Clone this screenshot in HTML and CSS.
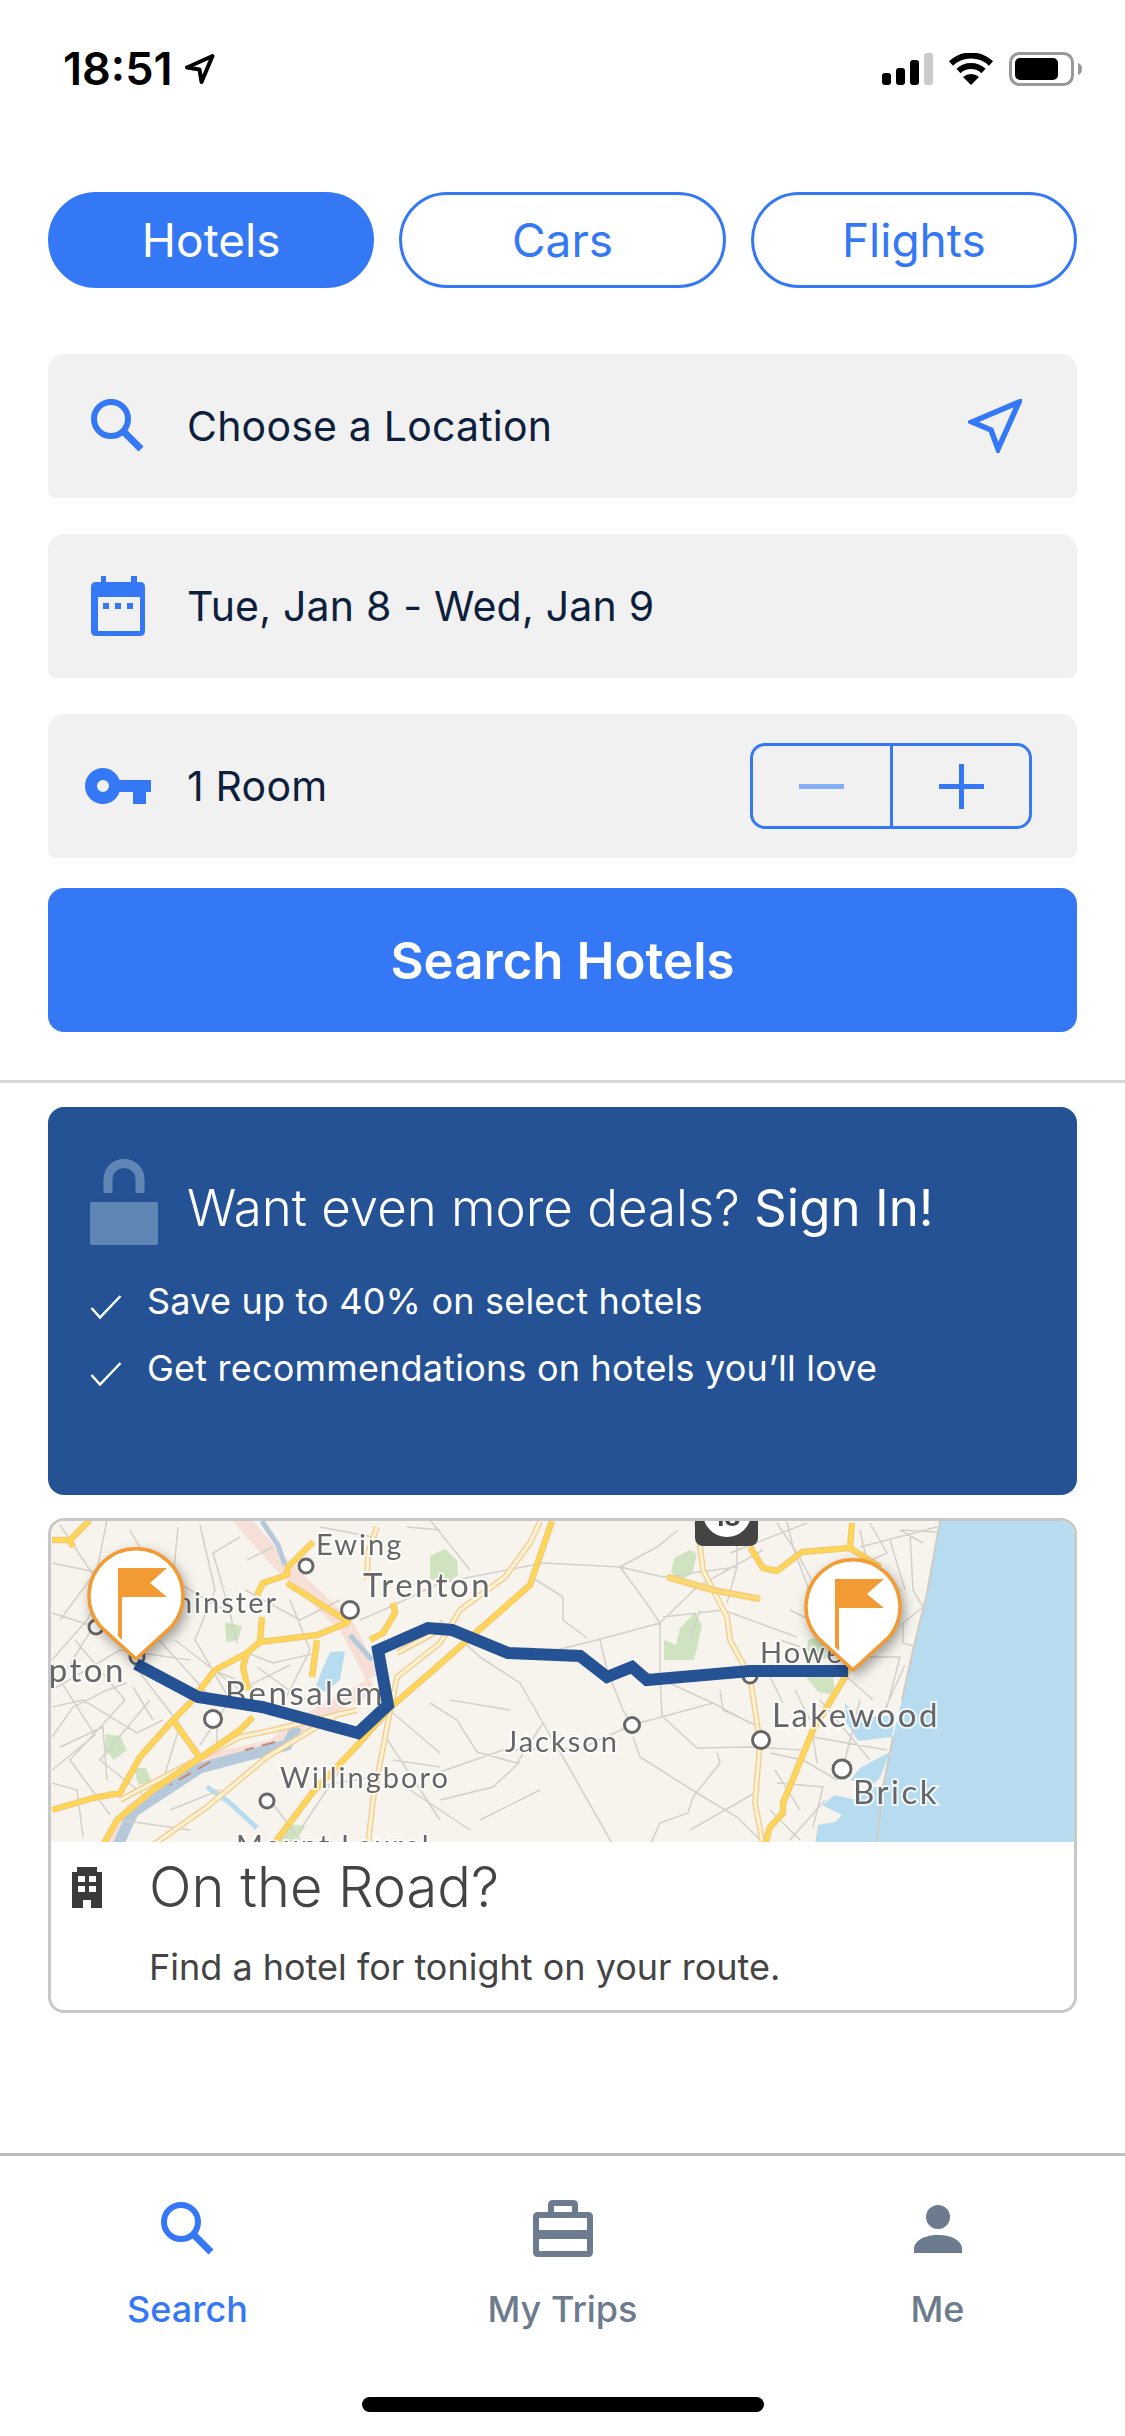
FILE: index.html
```html
<!DOCTYPE html>
<html lang="en">

<head>
    <meta charset="UTF-8" />
    <title>Search Hotels</title>
    <link rel="stylesheet" href="styles.css">
</head>

<body>
    <div class="phone">
        <!-- status bar -->
        <div class="status">
            <span class="time">18:51</span>
            <svg class="status-arrow" width="30" height="30" viewBox="0 0 30 30">
                <path d="M27.5 2 L2 13.5 L14.5 15.5 L16.5 28 Z" fill="none" stroke="#000" stroke-width="4" stroke-linejoin="round" />
            </svg>
            <svg class="status-signal" width="51" height="32" viewBox="0 0 51 32">
                <rect x="0" y="20" width="9" height="12" rx="3" fill="#000" />
                <rect x="14" y="15" width="9" height="17" rx="3" fill="#000" />
                <rect x="28" y="7" width="9" height="25" rx="3" fill="#000" />
                <rect x="42" y="0" width="9" height="32" rx="3" fill="#cbcbcb" />
            </svg>
            <svg class="status-wifi" width="46" height="32" viewBox="0 0 46 32">
                <path d="M3 10.5 A29 29 0 0 1 43 10.5" fill="none" stroke="#000" stroke-width="6" />
                <path d="M10.5 18 A18 18 0 0 1 35.500 18" fill="none" stroke="#000" stroke-width="6" />
                <path d="M23 32 L15 24 A12 12 0 0 1 31 24 Z" fill="#000" />
            </svg>
            <svg class="status-battery" width="73" height="34" viewBox="0 0 73 34">
                <rect x="1.500" y="1.500" width="62" height="31" rx="9" fill="none" stroke="#999" stroke-width="3" />
                <rect x="6" y="6" width="43" height="22" rx="5" fill="#000" />
                <path d="M69 11 C72 12 73 14 73 17 C73 20 72 22 69 23 Z" fill="#999" />
            </svg>
        </div>

        <!-- hotels / cars / flights -->
        <div class="pills">
            <div class="pill active">Hotels</div>
            <div class="pill">Cars</div>
            <div class="pill">Flights</div>
        </div>

        <div class="form">
            <div class="field">
                <div class="field-icon">
                    <svg width="54" height="54" viewBox="0 0 54 54">
                        <circle cx="20" cy="20" r="17" fill="none" stroke="#3578f6" stroke-width="6" />
                        <path d="M32 32 L50 50" stroke="#3578f6" stroke-width="7" />
                    </svg>
                </div>
                <span class="field-text">Choose a Location</span>
                <svg class="field-nav" width="54" height="54" viewBox="0 0 54 54">
                    <path d="M51 3 L4 23 L23 31 L30 50 Z" fill="none" stroke="#3578f6" stroke-width="5.500" />
                </svg>
            </div>
            <div class="field">
                <div class="field-icon">
                    <svg width="54" height="60" viewBox="0 0 54 60">
                        <path fill="#3578f6" fill-rule="evenodd" d="M10 0 H15 V6 H40 V0 H46 V6 H49 Q54 6 54 11 V55 Q54 60 49 60 H5 Q0 60 0 55 V11 Q0 6 5 6 H10 Z M7 21 V55 H49 V21 Z" />
                        <rect x="12" y="27" width="6" height="6" fill="#3578f6" />
                        <rect x="24" y="27" width="6" height="6" fill="#3578f6" />
                        <rect x="36" y="27" width="6" height="6" fill="#3578f6" />
                    </svg>
                </div>
                <span class="field-text">Tue, Jan 8 - Wed, Jan 9</span>
            </div>
            <div class="field">
                <div class="field-icon">
                    <svg width="66" height="36" viewBox="0 0 66 36">
                        <path fill="#3578f6" fill-rule="evenodd" d="M18 0 C26 0 32 5 34.500 12 H66 V24 H61 V36 H48 V24 H34.500 C32 31 26 36 18 36 C8 36 0 28 0 18 C0 8 8 0 18 0 Z M18 12 A6 6 0 1 0 18 24 A6 6 0 1 0 18 12 Z" />
                    </svg>
                </div>
                <span class="field-text">1 Room</span>
                <div class="stepper">
                    <div class="step minus"><span class="bar-h"></span></div>
                    <div class="step plus"><span class="bar-h"></span><span class="bar-v"></span></div>
                </div>
            </div>
            <div class="search-btn">Search Hotels</div>
        </div>

        <div class="divider"></div>

        <!-- sign in banner -->
        <div class="deals">
            <div class="deals-head">
                <svg class="deals-lock" width="68" height="86" viewBox="0 0 68 86">
                    <path d="M18 34 V21 C18 -1 50 -1 50 21 V34" fill="none" stroke="#5f86b5" stroke-width="9" />
                    <rect x="0" y="43" width="68" height="43" rx="2" fill="#5f86b5" />
                </svg>
                <div class="deals-title">Want even more deals? <span class="sign-in">Sign In!</span></div>
            </div>
            <ul class="deals-list">
                <li>
                    <svg width="32" height="24" viewBox="0 0 32 24"><path d="M1.500 13 L10 22.500 L30.500 1" fill="none" stroke="#fff" stroke-width="2.500" /></svg>
                    <span>Save up to 40% on select hotels</span>
                </li>
                <li>
                    <svg width="32" height="24" viewBox="0 0 32 24"><path d="M1.500 13 L10 22.500 L30.500 1" fill="none" stroke="#fff" stroke-width="2.500" /></svg>
                    <span>Get recommendations on hotels you’ll love</span>
                </li>
            </ul>
        </div>

        <!-- on the road card -->
        <div class="road-card">
            <svg class="map" width="1023" height="321" viewBox="51 1521 1023 321">
                <defs>
                    <path id="majors" d="M52 1540 L70 1540 L90 1520 M70 1540 L73 1547
                        M313 1542 L288 1567 L287 1575 L263 1583 L257 1595
                        M287 1583 L350 1623
                        M347 1623 L317 1635 L260 1642 L247 1653 L215 1670 L190 1703 L173 1720 L140 1757 L120 1793 L93 1798 L52 1810
                        M260 1642 L262 1617
                        M247 1653 L243 1667 L248 1690
                        M317 1640 L312 1677
                        M173 1720 L200 1758
                        M253 1717 L240 1730 L200 1758 L153 1790 L117 1820 L103 1845
                        M552 1521 L530 1585 L430 1673 L393 1705 L353 1750 L313 1792 L273 1845
                        M393 1603 L395 1613 L383 1633 L370 1640
                        M750 1547 L763 1568 L777 1571 L802 1552 L850 1548 L852 1523 M850 1548 L880 1567
                        M850 1660 L845 1677 L813 1730 L802 1757 L783 1803 L783 1813 L770 1827 L765 1845" />
                    <path id="seconds" d="M540 1522 L530 1543 L505 1577 L460 1610 L440 1643 L397 1677 L387 1727 L373 1800 L368 1845
                        M697 1522 L703 1570 L727 1617 L730 1640 L750 1677 L760 1743 L755 1803 L763 1845
                        M377 1527 L368 1553 L367 1580
                        M440 1630 L397 1653
                        M357 1710 L273 1730 L240 1737 L120 1800
                        M340 1713 L267 1757 L207 1807 L153 1845" />
                </defs>

                <rect x="51" y="1521" width="1023" height="321" fill="#f7f4ee" />

                <g class="map-base">
                    <g fill="#cfe3c0">
                        <path d="M225 1622 L242 1626 L238 1640 L226 1642 Z" />
                        <path d="M106 1734 L120 1736 L127 1750 L114 1760 L105 1750 Z" />
                        <path d="M134 1768 L146 1768 L152 1782 L138 1785 Z" />
                        <path d="M285 1824 L305 1826 L296 1842 L280 1842 Z" />
                        <path d="M430 1556 L445 1549 L457 1560 L458 1576 L440 1585 L430 1578 Z" />
                        <path d="M674 1558 L690 1550 L697 1554 L692 1574 L680 1580 L671 1572 Z" />
                        <path d="M664 1640 L676 1645 L680 1628 L695 1612 L702 1625 L697 1648 L694 1660 L664 1660 Z" />
                        <path d="M808 1640 L825 1634 L835 1650 L830 1658 L806 1660 Z" />
                        <path d="M806 1677 L833 1676 L835 1695 L818 1692 Z" />
                    </g>

                    <path d="M940 1519 L927 1593 L913 1650 L902 1700 L893 1737 L883 1787 L877 1845 L1076 1845 L1076 1519 Z" fill="#b7dcf0" />
                    <path d="M845 1703 L858 1718 L880 1716 L895 1716 L892 1737 L858 1741 L846 1722 Z" fill="#b7dcf0" />
                    <path d="M890 1752 L860 1768 L850 1780 L870 1785 L885 1790 L880 1845 L815 1845 L818 1825 L835 1822 L842 1815 L822 1805 L835 1795 L856 1800 L880 1778 Z" fill="#b7dcf0" />
                    <path d="M330 1652 L345 1651 L340 1680 L325 1692 L316 1686 L322 1670 Z" fill="#b7dcf0" />
                    <path d="M207 1787 L230 1803 L257 1828" fill="none" stroke="#b7dcf0" stroke-width="5" />

                    <!-- rivers -->
                    <path class="river-pink" d="M237 1515 L280 1563 L347 1627 L373 1677" />
                    <path class="river-pink" d="M373 1685 L297 1727 L273 1747 L200 1763 L133 1810 L113 1845" />
                    <path class="river-blue" d="M262 1521 L278 1545 L285 1565" />
                    <path class="river-blue" d="M350 1635 L372 1660" />
                    <path class="river-blue wide" d="M297 1727 L287 1745 L200 1768 L133 1812 L118 1845" />
                    <path class="river-dash" d="M275 1742 L245 1750 M210 1762 L170 1785 M150 1795 L125 1815" />

                    <!-- small roads -->
                    <path class="minor" d="M543 1563 L620 1567 L663 1577 L737 1567 M620 1567 L643 1598 L660 1623 L660 1677 L662 1717
                        M620 1567 L657 1547 L678 1530 M563 1597 L563 1620 L587 1638 M533 1578 L563 1597
                        M660 1623 L597 1640 L557 1650 M660 1623 L697 1587 L763 1550 M663 1617 L723 1610 L797 1637
                        M600 1640 L607 1670 L623 1710 L632 1725 M480 1657 L520 1683 L543 1723 L563 1757 L613 1845
                        M430 1703 L457 1720 L477 1752 L517 1763 L543 1723 M437 1773 L503 1750 L582 1748 L632 1725 L713 1703 L750 1723
                        M440 1800 L493 1787 L520 1762 M640 1757 L697 1793 L737 1817 L760 1840 M633 1737 L640 1757
                        M697 1748 L663 1717 M697 1748 L750 1747 L803 1750 M717 1753 L720 1763 L693 1797 L688 1813 L660 1823 L650 1845
                        M720 1690 L723 1710 L760 1727 M647 1673 L713 1703 M777 1523 L797 1553 L817 1590
                        M727 1603 L737 1567 L737 1540 M730 1553 L807 1523 M787 1522 L793 1547 L810 1593
                        M870 1523 L887 1553 L860 1565 M910 1533 L913 1590 L923 1607 M937 1527 L860 1547 M937 1532 L900 1530 L923 1543
                        M923 1607 L903 1623 L903 1643 L917 1647 M870 1657 L900 1657 L887 1707 M847 1677 L873 1700
                        M770 1677 L783 1703 M813 1737 L847 1743 L887 1750 M813 1737 L817 1763 M770 1753 L803 1760 L837 1780
                        M777 1783 L823 1787 L813 1827 M107 1520 L97 1570 L60 1620 M52 1563 L100 1573 L150 1630 L207 1693
                        M178 1527 L173 1580 L230 1613 L237 1643 M52 1613 L96 1627 M52 1660 L87 1620 L110 1577
                        M52 1737 L73 1707 L107 1690 L127 1683 M52 1707 L83 1700 L137 1733 L163 1720 M60 1747 L103 1727 L107 1780
                        M133 1687 L153 1720 M52 1783 L77 1790 L83 1837 M247 1560 L273 1547 M240 1537 L213 1553 L230 1613
                        M257 1667 L293 1693 L320 1707 M213 1670 L253 1687 M217 1720 L217 1750 M393 1713 L440 1753 M393 1760 L440 1767
                        M313 1787 L373 1777 M383 1733 L440 1820 M360 1620 L390 1607 L440 1583 L543 1563 M320 1527 L373 1537 M407 1527 L440 1530
                        M317 1653 L273 1663 L247 1653 M440 1620 L480 1657 M770 1810 L800 1840 M700 1610 L690 1640 M860 1700 L845 1760
                        M880 1600 L900 1590 M780 1640 L810 1650 M795 1690 L810 1720 M270 1800 L300 1840 M170 1810 L220 1790
                        M60 1525 L110 1600 L60 1680 L95 1735 L52 1770 M130 1530 L170 1600 L130 1660 L180 1725 L160 1790
                        M75 1640 L125 1700 L70 1760 L110 1815 M52 1690 L120 1650 L190 1660 M150 1700 L100 1760 L150 1800
                        M200 1525 L215 1590 L195 1640 L230 1700 L200 1745 M290 1600 L310 1650 L285 1700 M245 1590 L300 1620 L340 1600
                        M175 1640 L240 1690 L290 1665 M120 1820 L190 1830 M340 1770 L300 1830 M410 1790 L470 1830 M430 1520 L470 1570
                        M450 1700 L510 1710 M480 1820 L540 1790 M690 1830 L760 1790 M790 1610 L850 1640 M860 1530 L875 1600 L900 1625
                        M905 1665 L880 1720 M820 1700 L870 1760 M775 1770 L800 1810 M825 1800 L790 1840 M890 1540 L905 1590" />
                    <path class="shore" d="M940 1521 L927 1593 L913 1650 L902 1700 M893 1737 L883 1787 L877 1842" />

                    <!-- highways -->
                    <g class="road-case second"><use href="#seconds" /></g>
                    <g class="road-fill second"><use href="#seconds" /></g>
                    <g class="road-case"><use href="#majors" /></g>
                    <g class="road-fill"><use href="#majors" /></g>
                    <path class="road-case" d="M667 1577 L713 1590 L760 1599" />
                    <path class="road-fill orange" d="M667 1577 L713 1590 L760 1599" />

                    <!-- shield -->
                    <rect x="695" y="1505" width="63" height="41" rx="8" fill="#444" />
                    <circle cx="727" cy="1513" r="24" fill="#fff" />
                    <text class="shield-num" x="727" y="1526">18</text>

                    <!-- towns -->
                    <g class="town">
                        <circle cx="306" cy="1566" r="7" />
                        <circle cx="350" cy="1610" r="8.500" />
                        <circle cx="96" cy="1627" r="7" />
                        <circle cx="137" cy="1657" r="7" />
                        <circle cx="213" cy="1719" r="8.500" />
                        <circle cx="267" cy="1801" r="7" />
                        <circle cx="632" cy="1725" r="7.500" />
                        <circle cx="750" cy="1676" r="7" />
                        <circle cx="761" cy="1740" r="8.500" />
                        <circle cx="842" cy="1769" r="9" />
                    </g>

                    <g class="labels">
                        <text x="316" y="1555">Ewing</text>
                        <text class="large" x="363" y="1597">Trenton</text>
                        <text x="278" y="1613" text-anchor="end">Warminster</text>
                        <text class="large" x="126" y="1682" text-anchor="end">Southampton</text>
                        <text class="large" x="225" y="1705">Bensalem</text>
                        <text x="280" y="1788">Willingboro</text>
                        <text x="236" y="1856">Mount Laurel</text>
                        <text x="505" y="1752">Jackson</text>
                        <text x="760" y="1663">Howell</text>
                        <text class="large" x="772" y="1727">Lakewood</text>
                        <text class="large" x="853" y="1804">Brick</text>
                    </g>
                </g>

                <path class="route" d="M136 1664 L198 1697 L262 1707 L358 1733 L388 1705 L378 1650 L428 1628 L452 1630 L508 1653 L580 1656 L607 1677 L632 1667 L647 1680 L750 1671 L848 1671" />

                <g class="map-pin" transform="translate(136 1596)">
                    <path d="M0 63 L-36 30 A47 47 0 1 1 36 30 Z" fill="#fff" stroke="#f29a33" stroke-width="3.500" stroke-linejoin="round" />
                    <path d="M-18 -28 H31 L14 -13 L31 1 H-14 V44 L-18 40 Z" fill="#f29a33" />
                </g>
                <g class="map-pin" transform="translate(853 1607)">
                    <path d="M0 63 L-36 30 A47 47 0 1 1 36 30 Z" fill="#fff" stroke="#f29a33" stroke-width="3.500" stroke-linejoin="round" />
                    <path d="M-18 -28 H31 L14 -13 L31 1 H-14 V44 L-18 40 Z" fill="#f29a33" />
                </g>
            </svg>
            <div class="road-head">
                <svg class="road-icon" width="30" height="41" viewBox="0 0 30 41">
                    <path fill="#3a3a3a" fill-rule="evenodd" d="M5 0 H25 V5 H30 V41 H19 V33 H11 V41 H0 V5 H5 Z M6 9 V15 H13 V9 Z M17 9 V15 H24 V9 Z M6 19 V25 H13 V19 Z M17 19 V25 H24 V19 Z" />
                </svg>
                <div class="road-title">On the Road?</div>
            </div>
            <div class="road-sub">Find a hotel for tonight on your route.</div>
        </div>

        <!-- bottom tabs -->
        <div class="tabbar">
            <div class="tabs">
                <div class="tab active">
                    <div class="tab-icon">
                        <svg width="54" height="54" viewBox="0 0 54 54">
                            <circle cx="20" cy="20" r="17" fill="none" stroke="#3578f6" stroke-width="6" />
                            <path d="M32 32 L50 50" stroke="#3578f6" stroke-width="7" />
                        </svg>
                    </div>
                    <span>Search</span>
                </div>
                <div class="tab">
                    <div class="tab-icon">
                        <svg width="60" height="57" viewBox="0 0 60 57">
                            <path fill="#6c7b8d" fill-rule="evenodd" d="M20 0 H40 Q45 0 45 5 V12 H55 Q60 12 60 17 V52 Q60 57 55 57 H5 Q0 57 0 52 V17 Q0 12 5 12 H15 V5 Q15 0 20 0 Z M21 6 V12 H39 V6 Z M6 18 V30 H54 V18 Z M6 39 V51 H54 V39 Z" />
                        </svg>
                    </div>
                    <span>My Trips</span>
                </div>
                <div class="tab">
                    <div class="tab-icon">
                        <svg width="48" height="48" viewBox="0 0 48 48">
                            <circle cx="24" cy="12" r="12" fill="#6c7b8d" />
                            <path d="M0 48 V44 C0 36 10 30 24 30 C38 30 48 36 48 44 V48 Z" fill="#6c7b8d" />
                        </svg>
                    </div>
                    <span>Me</span>
                </div>
            </div>
            <div class="home-bar"></div>
        </div>
    </div>
</body>

</html>
```

FILE: styles.css
```css
* {
    margin: 0;
    padding: 0;
    box-sizing: border-box;
}

ul {
    list-style: none;
}

body {
    background: #fff;
    font-family: "Inter", "Liberation Sans", sans-serif;
    color: #0d1f3c;
}

.phone {
    display: flex;
    flex-direction: column;
    width: 1125px;
    height: 2436px;
    overflow: hidden;
}

/* status bar */
.status {
    display: flex;
    align-items: center;
    height: 192px;
    padding: 52px 43px 106px 63px;
}

.time {
    font-size: 45px;
    font-weight: 600;
    line-height: 34px;
    color: #000;
}

.status-arrow {
    margin-left: 12px;
}

.status-signal {
    margin-left: auto;
}

.status-wifi {
    margin-left: 15px;
}

.status-battery {
    margin-left: 15px;
}

/* top pills */
.pills {
    display: grid;
    grid-template-columns: repeat(3, 1fr);
    gap: 25px;
    padding: 0 48px;
}

.pill {
    height: 96px;
    border: 3px solid #3578f6;
    border-radius: 48px;
    color: #3578f6;
    font-size: 46px;
    line-height: 90px;
    text-align: center;
}

.pill.active {
    background-color: #3578f6;
    color: #fff;
}

/* form */
.form {
    display: flex;
    flex-direction: column;
    gap: 36px;
    margin-top: 66px;
    padding: 0 48px;
}

.field {
    display: flex;
    align-items: center;
    height: 144px;
    background-color: #f1f1f1;
    border-radius: 16px 16px 8px 8px;
}

.field-icon {
    display: flex;
    justify-content: center;
    width: 139px;
    flex-shrink: 0;
}

.field-text {
    font-size: 41px;
    letter-spacing: 0.2px;
    line-height: 50px;
}

.field-nav {
    margin-left: auto;
    margin-right: 55px;
}

.stepper {
    display: flex;
    width: 282px;
    height: 86px;
    margin-left: auto;
    margin-right: 45px;
    border: 3px solid #3578f6;
    border-radius: 15px;
}

.step {
    position: relative;
    flex: 1;
}

.step.minus {
    border-right: 3px solid #3578f6;
}

.bar-h {
    position: absolute;
    top: 38px;
    left: 46px;
    width: 45px;
    height: 5px;
    background-color: #3578f6;
}

.minus .bar-h {
    background-color: #86b0f5;
}

.bar-v {
    position: absolute;
    top: 18px;
    left: 66px;
    width: 5px;
    height: 45px;
    background-color: #3578f6;
}

.search-btn {
    height: 144px;
    margin-top: -6px;
    background-color: #3578f6;
    border-radius: 16px;
    color: #fff;
    font-size: 51px;
    font-weight: 600;
    line-height: 146px;
    text-align: center;
}

.divider {
    height: 3px;
    margin-top: 48px;
    background-color: #d6d6d6;
}

/* sign in banner */
.deals {
    height: 388px;
    margin: 24px 48px 0;
    padding: 52px 0 0 42px;
    background-color: #245294;
    border-radius: 16px;
    color: #fff;
}

.deals-head {
    display: flex;
    align-items: flex-end;
    gap: 29px;
}

.deals-title {
    margin-bottom: 7px;
    font-size: 51px;
    font-weight: 300;
    line-height: 60px;
    white-space: nowrap;
}

.sign-in {
    font-weight: 400;
}

.deals-list {
    margin-top: 22px;
}

.deals-list li {
    display: flex;
    align-items: center;
    gap: 25px;
    height: 67px;
    font-size: 36px;
    letter-spacing: 0.2px;
}

.deals-list svg {
    flex-shrink: 0;
    margin-top: 12px;
}

/* on the road */
.road-card {
    height: 495px;
    margin: 23px 48px 0;
    background-color: #fff;
    border: 3px solid #c8c8c8;
    border-radius: 16px;
    overflow: hidden;
}

.map {
    display: block;
}

.map-base {
    filter: blur(0.4px);
}

.minor {
    fill: none;
    stroke: #d3d0ca;
    stroke-width: 1.5;
}

.shore {
    fill: none;
    stroke: #cfccc6;
    stroke-width: 2;
}

.river-pink {
    fill: none;
    stroke: #f5dfd7;
    stroke-width: 15;
}

.river-blue {
    fill: none;
    stroke: #b5c9da;
    stroke-width: 5;
}

.river-blue.wide {
    stroke-width: 11;
}

.river-dash {
    fill: none;
    stroke: #c9897a;
    stroke-width: 2;
    stroke-dasharray: 14 8;
}

.road-case {
    fill: none;
    stroke: #f6c877;
    stroke-width: 6.5;
    stroke-linejoin: round;
}

.road-fill {
    fill: none;
    stroke: #fdd654;
    stroke-width: 4;
    stroke-linejoin: round;
}

.road-case.second {
    stroke: #f2cf98;
    stroke-width: 6;
}

.road-fill.second {
    stroke: #fdf3d0;
    stroke-width: 3;
}

.road-fill.orange {
    stroke: #fbd976;
}

.town circle {
    fill: #fff;
    stroke: #666;
    stroke-width: 3;
}

.labels text {
    fill: #666;
    stroke: rgba(255, 255, 255, 0.75);
    stroke-width: 4px;
    paint-order: stroke;
    font-family: "Lato", "Liberation Sans", sans-serif;
    font-size: 29px;
    letter-spacing: 2px;
}

.labels text.large {
    font-size: 33px;
    letter-spacing: 2.5px;
}

.shield-num {
    fill: #444;
    font-size: 25px;
    font-weight: 700;
    text-anchor: middle;
}

.route {
    fill: none;
    stroke: #245294;
    stroke-width: 12;
    stroke-linejoin: miter;
}

.map-pin {
    filter: drop-shadow(3px 5px 6px rgba(0, 0, 0, 0.35));
}

.road-head {
    display: flex;
    align-items: flex-end;
    height: 66px;
    padding-left: 21px;
    color: #444;
}

.road-icon {
    flex-shrink: 0;
}

.road-title {
    margin-left: 47px;
    margin-bottom: -12px;
    font-size: 56px;
    font-weight: 300;
    line-height: 66px;
}

.road-sub {
    margin-top: 38px;
    padding-left: 98px;
    color: #444;
    font-size: 36px;
    line-height: 42px;
}

/* bottom tabs */
.tabbar {
    display: flex;
    flex-direction: column;
    height: 283px;
    margin-top: auto;
    border-top: 3px solid #bdbdbd;
}

.tabs {
    display: grid;
    grid-template-columns: repeat(3, 1fr);
}

.tab {
    display: flex;
    flex-direction: column;
    align-items: center;
    color: #6c7b8d;
    font-size: 36px;
    font-weight: 500;
    line-height: 42px;
}

.tab.active {
    color: #3578f6;
}

.tab-icon {
    display: flex;
    align-items: center;
    justify-content: center;
    height: 57px;
    margin-top: 44px;
    margin-bottom: 31px;
}

.home-bar {
    width: 402px;
    height: 15px;
    margin: auto auto 24px;
    background-color: #000;
    border-radius: 8px;
}
```
